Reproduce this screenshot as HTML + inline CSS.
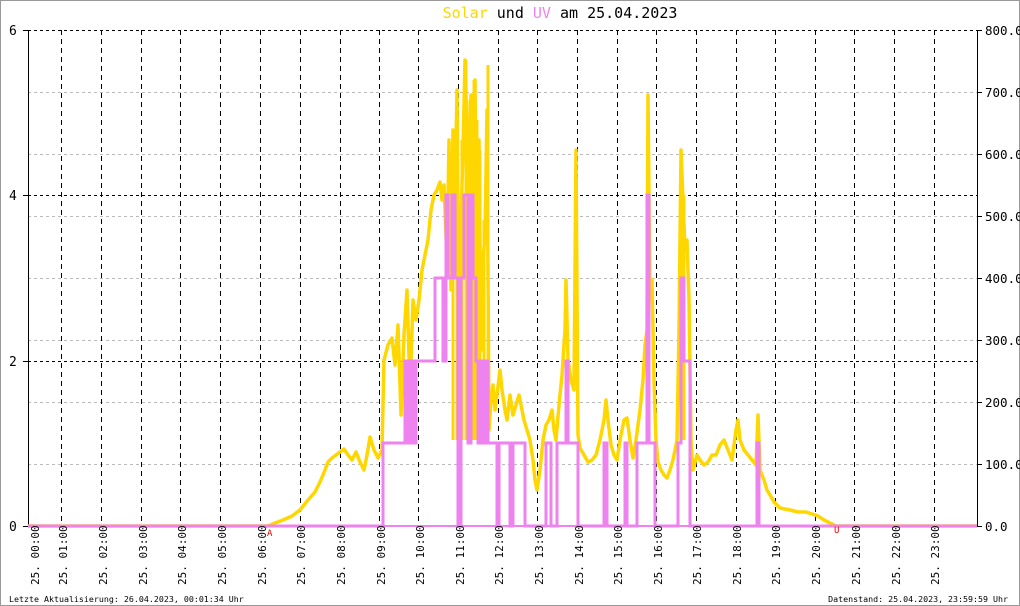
<!DOCTYPE html>
<html><head><meta charset="utf-8"><style>
html,body{margin:0;padding:0;background:#fff;}
svg{display:block;font-family:"DejaVu Sans Mono","Liberation Mono",monospace;}
</style></head><body>
<svg width="1020" height="606" viewBox="0 0 1020 606" xmlns="http://www.w3.org/2000/svg">
<rect x="0.5" y="0.5" width="1019" height="605" fill="#fff" stroke="#999"/>
<text x="560" y="18" font-size="15" text-anchor="middle"><tspan fill="#ffd700">Solar</tspan> und <tspan fill="#ee82ee">UV</tspan> am 25.04.2023</text>
<g stroke="#bbb" stroke-dasharray="3,3" stroke-width="1">
<line x1="28" y1="92.5" x2="977" y2="92.5"/><line x1="28" y1="154.5" x2="977" y2="154.5"/>
<line x1="28" y1="216.5" x2="977" y2="216.5"/><line x1="28" y1="278.5" x2="977" y2="278.5"/>
<line x1="28" y1="340.5" x2="977" y2="340.5"/><line x1="28" y1="402.5" x2="977" y2="402.5"/>
<line x1="28" y1="464.5" x2="977" y2="464.5"/>
</g>
<g stroke="#000" stroke-dasharray="3,3" stroke-width="1">
<line x1="28" y1="30.5" x2="977" y2="30.5"/><line x1="28" y1="195.5" x2="977" y2="195.5"/><line x1="28" y1="361.5" x2="977" y2="361.5"/>
</g>
<g stroke="#000" stroke-dasharray="5,4" stroke-width="1">
<line x1="61.5" y1="30" x2="61.5" y2="526"/><line x1="101.5" y1="30" x2="101.5" y2="526"/><line x1="141.5" y1="30" x2="141.5" y2="526"/>
<line x1="180.5" y1="30" x2="180.5" y2="526"/><line x1="220.5" y1="30" x2="220.5" y2="526"/><line x1="260.5" y1="30" x2="260.5" y2="526"/>
<line x1="300.5" y1="30" x2="300.5" y2="526"/><line x1="340.5" y1="30" x2="340.5" y2="526"/><line x1="379.5" y1="30" x2="379.5" y2="526"/>
<line x1="418.5" y1="30" x2="418.5" y2="526"/><line x1="458.5" y1="30" x2="458.5" y2="526"/><line x1="498.5" y1="30" x2="498.5" y2="526"/>
<line x1="537.5" y1="30" x2="537.5" y2="526"/><line x1="577.5" y1="30" x2="577.5" y2="526"/><line x1="617.5" y1="30" x2="617.5" y2="526"/>
<line x1="656.5" y1="30" x2="656.5" y2="526"/><line x1="696.5" y1="30" x2="696.5" y2="526"/><line x1="736.5" y1="30" x2="736.5" y2="526"/>
<line x1="775.5" y1="30" x2="775.5" y2="526"/><line x1="815.5" y1="30" x2="815.5" y2="526"/><line x1="854.5" y1="30" x2="854.5" y2="526"/>
<line x1="894.5" y1="30" x2="894.5" y2="526"/><line x1="934.5" y1="30" x2="934.5" y2="526"/>
</g>
<line x1="28.5" y1="30" x2="28.5" y2="526" stroke="#000"/>
<line x1="977.5" y1="30" x2="977.5" y2="526" stroke="#000"/>
<g stroke="#000"><line x1="23" y1="30.5" x2="28" y2="30.5"/><line x1="23" y1="195.5" x2="28" y2="195.5"/><line x1="23" y1="361.5" x2="28" y2="361.5"/><line x1="23" y1="526.5" x2="28" y2="526.5"/>
<line x1="977" y1="30.5" x2="982" y2="30.5"/><line x1="977" y1="92.5" x2="982" y2="92.5"/><line x1="977" y1="154.5" x2="982" y2="154.5"/><line x1="977" y1="216.5" x2="982" y2="216.5"/><line x1="977" y1="278.5" x2="982" y2="278.5"/><line x1="977" y1="340.5" x2="982" y2="340.5"/><line x1="977" y1="402.5" x2="982" y2="402.5"/><line x1="977" y1="464.5" x2="982" y2="464.5"/><line x1="977" y1="526.5" x2="982" y2="526.5"/></g>
<g font-size="13" fill="#000">
<text x="9" y="35">6</text><text x="9" y="200">4</text><text x="9" y="366">2</text><text x="9" y="531">0</text>
</g>
<g font-size="12.5" fill="#000">
<text x="985" y="35">800.0</text><text x="985" y="97">700.0</text><text x="985" y="159">600.0</text><text x="985" y="221">500.0</text>
<text x="985" y="283">400.0</text><text x="985" y="345">300.0</text><text x="985" y="407">200.0</text><text x="985" y="469">100.0</text><text x="985" y="531">0.0</text>
</g>
<g fill="none" stroke="#ffd700" stroke-width="3.5" stroke-linejoin="round">
<polyline points="28,526 268,526 275,523 283,520 292,516 300,510 308,500 315,492 320,482 325,470 328,462 332,458 336,455 340,452 344,449 348,455 352,460 356,452 360,462 364,470 367,455 370,437 374,450 378,458 382,450 384,360 388,345 392,338 395,365 398,325 401,415 404,335 407,290 410,390 413,300 416,320 419,300 422,270 425,255 428,240 431,210 434,195 437,190 440,182 442,200 444,185 447,260 449,140 451,290 453,130 455,200 457,90 459,350 461,220 463,150 465,60 467,130 469,200 471,95 473,280 475,80 477,300 479,140 481,350 483,260 485,235 487,110 489,430 491,400 493,385 495,410 497,395 500,370 502,390 505,410 507,420 510,395 513,415 516,405 519,395 521,405 524,420 527,430 530,440 533,460 535,480 537,490 540,470 543,440 546,425 549,420 552,410 554,430 556,440 559,405 562,375 565,330 566,280 568,360 571,380 574,390 576,150 578,435 580,448 584,455 588,462 592,460 596,455 600,440 604,420 606,400 608,420 611,445 614,455 617,460 620,440 624,420 627,418 630,440 633,458 636,440 640,410 643,380 645,345 647,330 648,95 650,300 652,280 654,380 656,440 658,462 661,470 664,475 667,478 670,470 673,460 677,440 679,330 681,150 683,200 685,250 687,240 689,300 691,440 693,470 697,455 700,460 704,465 708,462 712,455 716,455 720,445 724,440 728,450 732,460 736,430 738,420 740,440 744,450 748,455 752,460 756,465 758,415 760,470 764,480 767,490 770,495 774,502 780,508 790,510 798,512 806,512 812,514 818,516 824,520 830,523 836,526 977,526"/>
</g>
<g stroke="#ffd700" stroke-width="3">
<line x1="453" y1="150" x2="453" y2="440"/><line x1="457" y1="90" x2="457" y2="440"/><line x1="462" y1="140" x2="462" y2="440"/>
<line x1="466" y1="60" x2="466" y2="440"/><line x1="470" y1="100" x2="470" y2="440"/><line x1="474" y1="80" x2="474" y2="440"/>
<line x1="477" y1="120" x2="477" y2="440"/><line x1="480" y1="150" x2="480" y2="440"/><line x1="484" y1="220" x2="484" y2="440"/><line x1="488" y1="65" x2="488" y2="440"/>
<line x1="681" y1="150" x2="681" y2="440"/><line x1="684" y1="195" x2="684" y2="440"/>
</g>
<polyline fill="none" stroke="#ee82ee" stroke-width="3" points="28,526 383,526 383,443 405,443 405,361 407,361 407,443 410,443 410,361 413,361 413,443 416,443 416,361 418,361 418,361 435,361 435,278 443,278 443,361 446,361 446,195 448,195 448,278 452,278 452,195 455,195 455,278 458,278 458,526 461,526 461,278 464,278 464,195 468,195 468,443 471,443 471,195 473,195 473,278 476,278 476,361 478,361 478,443 481,443 481,361 484,361 484,443 486,443 486,361 488,361 488,443 497,443 497,526 499,526 499,443 510,443 510,526 513,526 513,443 525,443 525,526 530,526 530,526 546,526 546,443 551,443 551,526 557,526 557,443 566,443 566,361 568,361 568,443 578,443 578,526 604,526 604,443 607,443 607,526 625,526 625,443 627,443 627,526 637,526 637,443 647,443 647,195 649,195 649,443 655,443 655,526 678,526 678,443 681,443 681,278 684,278 684,361 690,361 690,526 757,526 757,443 759,443 759,526 977,526"/>
<line x1="28" y1="526" x2="977" y2="526" stroke="#ee82ee" stroke-width="2"/>
<text x="267" y="536" font-size="9" fill="#e00">A</text>
<text x="834" y="533" font-size="9" fill="#e00">U</text>
<g font-size="11" fill="#000">
<text transform="translate(39,585) rotate(-90)">25. 00:00</text>
<text transform="translate(67,585) rotate(-90)">25. 01:00</text>
<text transform="translate(107,585) rotate(-90)">25. 02:00</text>
<text transform="translate(147,585) rotate(-90)">25. 03:00</text>
<text transform="translate(186,585) rotate(-90)">25. 04:00</text>
<text transform="translate(226,585) rotate(-90)">25. 05:00</text>
<text transform="translate(266,585) rotate(-90)">25. 06:00</text>
<text transform="translate(305,585) rotate(-90)">25. 07:00</text>
<text transform="translate(345,585) rotate(-90)">25. 08:00</text>
<text transform="translate(385,585) rotate(-90)">25. 09:00</text>
<text transform="translate(424,585) rotate(-90)">25. 10:00</text>
<text transform="translate(464,585) rotate(-90)">25. 11:00</text>
<text transform="translate(503,585) rotate(-90)">25. 12:00</text>
<text transform="translate(543,585) rotate(-90)">25. 13:00</text>
<text transform="translate(583,585) rotate(-90)">25. 14:00</text>
<text transform="translate(622,585) rotate(-90)">25. 15:00</text>
<text transform="translate(662,585) rotate(-90)">25. 16:00</text>
<text transform="translate(701,585) rotate(-90)">25. 17:00</text>
<text transform="translate(741,585) rotate(-90)">25. 18:00</text>
<text transform="translate(780,585) rotate(-90)">25. 19:00</text>
<text transform="translate(820,585) rotate(-90)">25. 20:00</text>
<text transform="translate(860,585) rotate(-90)">25. 21:00</text>
<text transform="translate(900,585) rotate(-90)">25. 22:00</text>
<text transform="translate(939,585) rotate(-90)">25. 23:00</text>
</g>
<text x="9" y="602" font-size="8.3" fill="#000">Letzte Aktualisierung: 26.04.2023, 00:01:34 Uhr</text>
<text x="1008" y="602" font-size="8.3" fill="#000" text-anchor="end">Datenstand: 25.04.2023, 23:59:59 Uhr</text>
</svg>
</body></html>
